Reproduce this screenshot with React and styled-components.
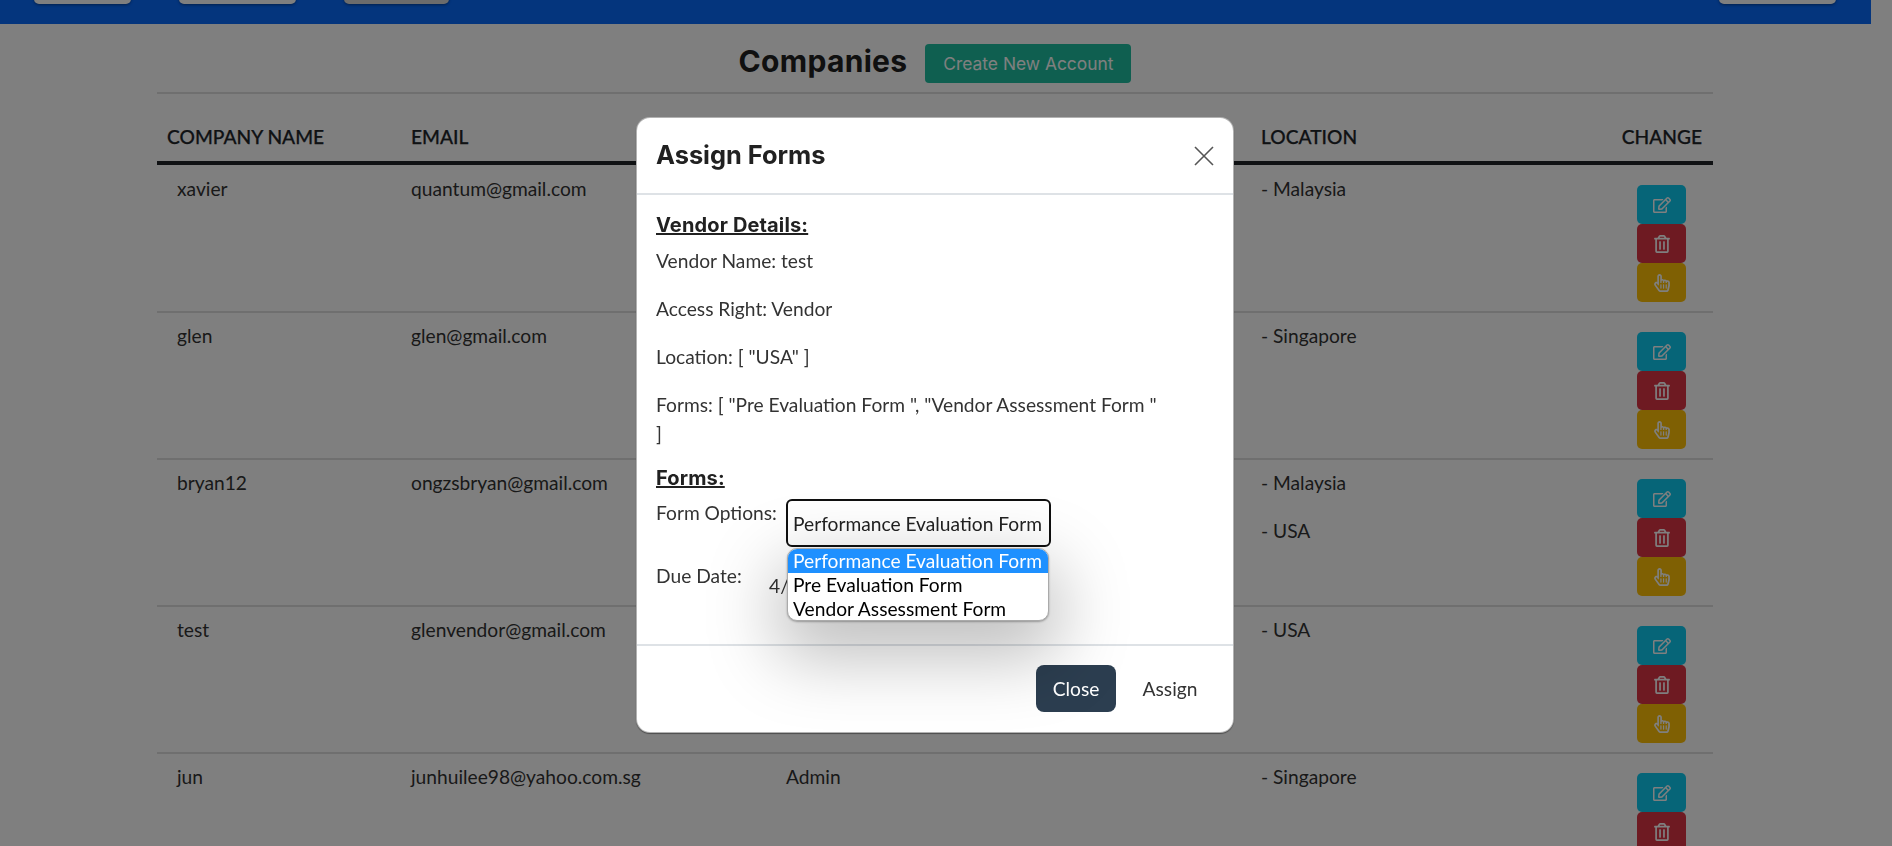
import React from "react";
import styled, { createGlobalStyle } from "styled-components";
import { FaRegEdit, FaRegTrashAlt, FaRegHandPointer } from "react-icons/fa";

const companies = [
  { name: "xavier", email: "quantum@gmail.com", right: "Vendor", locations: ["Malaysia"] },
  { name: "glen", email: "glen@gmail.com", right: "Admin", locations: ["Singapore"] },
  { name: "bryan12", email: "ongzsbryan@gmail.com", right: "Vendor", locations: ["Malaysia", "USA"] },
  { name: "test", email: "glenvendor@gmail.com", right: "Vendor", locations: ["USA"] },
  { name: "jun", email: "junhuilee98@yahoo.com.sg", right: "Admin", locations: ["Singapore"] },
];

const formOptions = ["Performance Evaluation Form", "Pre Evaluation Form", "Vendor Assessment Form"];

const App = () => {
  return (
    <>
      <GlobalStyle />
      <Page>
        <Nav>
          <NavGroup>
            <NavButton $w={97} />
            <NavButton $w={117} />
            <NavButton $w={105} $active />
          </NavGroup>
          <NavButton $w={117} />
        </Nav>
        <Content>
          <TitleRow>
            <Title>Companies</Title>
            <CreateButton>Create New Account</CreateButton>
          </TitleRow>
          <HeaderRow>
            <HeaderCell>COMPANY NAME</HeaderCell>
            <HeaderCell>EMAIL</HeaderCell>
            <HeaderCell>ACCESS RIGHT</HeaderCell>
            <HeaderCell>LOCATION</HeaderCell>
            <HeaderCell $right>CHANGE</HeaderCell>
          </HeaderRow>
          {companies.map((company) => (
            <Row key={company.name}>
              <NameCell>{company.name}</NameCell>
              <Cell>{company.email}</Cell>
              <Cell>{company.right}</Cell>
              <Cell>
                {company.locations.map((location) => (
                  <LocationLine key={location}>- {location}</LocationLine>
                ))}
              </Cell>
              <ChangeCell>
                <ActionButton $color="#0dcaf0">
                  <FaRegEdit />
                </ActionButton>
                <ActionButton $color="#dc3545">
                  <FaRegTrashAlt />
                </ActionButton>
                <ActionButton $color="#ffc107">
                  <FaRegHandPointer />
                </ActionButton>
              </ChangeCell>
            </Row>
          ))}
        </Content>
      </Page>

      <Overlay>
        <Modal>
          <ModalHeader>
            <ModalTitle>Assign Forms</ModalTitle>
            <CloseIcon width="20" height="20" viewBox="0 0 20 20">
              <path d="M1 1 L19 19 M19 1 L1 19" stroke="#555" strokeWidth="1.6" fill="none" />
            </CloseIcon>
          </ModalHeader>
          <ModalBody>
            <SectionTitle>Vendor Details:</SectionTitle>
            <Detail>Vendor Name: test</Detail>
            <Detail>Access Right: Vendor</Detail>
            <Detail>Location: [ "USA" ]</Detail>
            <Detail>Forms: [ "Pre Evaluation Form ", "Vendor Assessment Form " ]</Detail>
            <SectionTitle $second>Forms:</SectionTitle>
            <FormRow>
              <FormLabel $w={130}>Form Options:</FormLabel>
              <SelectWrap>
                <SelectBox>{formOptions[0]}</SelectBox>
                <Popup>
                  {formOptions.map((option, i) => (
                    <Option key={option} $selected={i === 0}>
                      {option}
                    </Option>
                  ))}
                </Popup>
              </SelectWrap>
            </FormRow>
            <FormRow $date>
              <FormLabel $w={113}>Due Date:</FormLabel>
              <DateValue>4/12/2023</DateValue>
            </FormRow>
          </ModalBody>
          <ModalFooter>
            <CloseButton>Close</CloseButton>
            <AssignButton>Assign</AssignButton>
          </ModalFooter>
        </Modal>
      </Overlay>
    </>
  );
};

const GlobalStyle = createGlobalStyle`
  html, body {
    margin: 0;
    height: 100%;
    overflow: hidden;
    background: #fff;
  }

  body {
    font-family: "Lato", "Liberation Sans", sans-serif;
    font-size: 19.2px;
    line-height: 1.5;
    color: #333;
  }

  * {
    box-sizing: border-box;
  }
`;

const Page = styled.div`
  width: 1871px;
  height: 846px;
  overflow: hidden;
`;

const Nav = styled.div`
  height: 24px;
  background: #086afb;
  display: flex;
  justify-content: space-between;
  align-items: flex-end;
  padding: 0 35px 20px 34px;
`;

const NavGroup = styled.div`
  display: flex;
  gap: 48px;
`;

const NavButton = styled.div`
  width: ${(p) => p.$w}px;
  height: 30px;
  flex-shrink: 0;
  border-radius: 5px;
  background: ${(p) => (p.$active ? "#d8d8d8" : "#ffffff")};
  box-shadow: 0 1px 3px rgba(0, 0, 0, 0.4);
`;

const Content = styled.div`
  width: 1556px;
  margin-left: 157px;
`;

const TitleRow = styled.div`
  height: 70px;
  padding-top: 20px;
  display: flex;
  justify-content: center;
  align-items: flex-start;
  gap: 18px;
  border-bottom: 2px solid #dedede;
`;

const Title = styled.h1`
  margin: -2px 0 0;
  font-family: "Inter", sans-serif;
  font-size: 30px;
  font-weight: 700;
  letter-spacing: 0.3px;
  line-height: 39px;
  color: #212121;
`;

const CreateButton = styled.button`
  width: 206px;
  height: 39px;
  padding: 0;
  border: none;
  border-radius: 4px;
  background: #1ebea0;
  color: #fff;
  font-family: "Inter", sans-serif;
  font-size: 17.4px;
`;

const HeaderRow = styled.div`
  display: grid;
  grid-template-columns: 244px 375px 475px 1fr auto;
  height: 71px;
  margin-bottom: 1px;
  padding: 29px 11px 0 10px;
  border-bottom: 4px solid #212529;
`;

const HeaderCell = styled.div`
  font-weight: 500;
  -webkit-text-stroke: 0.25px #212529;
  color: #212529;
  text-align: ${(p) => (p.$right ? "right" : "left")};
  white-space: nowrap;
`;

const Row = styled.div`
  display: grid;
  grid-template-columns: 244px 375px 475px 1fr auto;
  height: 147px;
  padding: 9px 27px 0 10px;
  border-bottom: 2px solid #dedede;
`;

const Cell = styled.div`
  color: #333;
`;

const NameCell = styled(Cell)`
  padding-left: 10px;
`;

const LocationLine = styled.div`
  margin-bottom: 19.2px;
`;

const ChangeCell = styled.div`
  display: flex;
  flex-direction: column;
  padding-top: 10px;
`;

const ActionButton = styled.div`
  width: 49px;
  height: 39px;
  display: flex;
  align-items: center;
  justify-content: center;
  border-radius: 5px;
  background: ${(p) => p.$color};
  color: #fff;
  font-size: 18px;
`;

const Overlay = styled.div`
  position: fixed;
  inset: 0;
  background: rgba(0, 0, 0, 0.5);
  padding: 117px 22px 0 0;
  display: flex;
  justify-content: center;
  align-items: flex-start;
`;

const Modal = styled.div`
  width: 598px;
  height: 616px;
  display: flex;
  flex-direction: column;
  background: #fff;
  border: 1px solid rgba(0, 0, 0, 0.3);
  border-radius: 14px;
  box-shadow: 0 1px 1px rgba(0, 0, 0, 0.4);
`;

const ModalHeader = styled.div`
  height: 77px;
  flex-shrink: 0;
  display: flex;
  align-items: center;
  justify-content: space-between;
  padding: 0 19px;
  border-bottom: 2px solid #dee2e6;
`;

const ModalTitle = styled.h4`
  margin: 0;
  font-family: "Inter", sans-serif;
  font-size: 25.4px;
  font-weight: 700;
  color: #212121;
`;

const CloseIcon = styled.svg`
  display: block;
`;

const ModalBody = styled.div`
  flex: 1;
  padding: 16px 19px 0;
`;

const SectionTitle = styled.div`
  font-family: "Inter", sans-serif;
  font-size: 20px;
  font-weight: 700;
  letter-spacing: 0.15px;
  line-height: 28.8px;
  text-decoration: underline;
  color: #212121;
  margin-top: ${(p) => (p.$second ? "-4px" : "0")};
  margin-bottom: 7px;
`;

const Detail = styled.p`
  margin: 0 0 19.2px;
  max-width: 506px;
`;

const FormRow = styled.div`
  display: flex;
  margin-top: ${(p) => (p.$date ? "15px" : "0")};
`;

const FormLabel = styled.div`
  width: ${(p) => p.$w}px;
  flex-shrink: 0;
`;

const SelectWrap = styled.div`
  position: relative;
`;

const SelectBox = styled.div`
  width: 265px;
  height: 48px;
  padding: 3px 5px 0;
  display: flex;
  align-items: center;
  background: #fff;
  border: 2px solid #101010;
  border-radius: 6px;
  color: #222;
  white-space: nowrap;
`;

const Popup = styled.div`
  position: absolute;
  z-index: 2;
  top: 49px;
  left: 1px;
  width: 262px;
  height: 73px;
  overflow: hidden;
  background: #fff;
  border: 1px solid #aaa;
  border-radius: 10px;
  box-shadow: 0 1px 2px rgba(0, 0, 0, 0.3), 0 26px 70px 10px rgba(0, 0, 0, 0.26);
`;

const Option = styled.div`
  height: 24px;
  padding: 0 5px;
  line-height: 24px;
  white-space: nowrap;
  color: ${(p) => (p.$selected ? "#fff" : "#000")};
  background: ${(p) => (p.$selected ? "#1e90ff" : "transparent")};
`;

const DateValue = styled.div`
  padding-top: 10px;
  color: #333;
`;

const ModalFooter = styled.div`
  height: 88px;
  flex-shrink: 0;
  display: flex;
  justify-content: flex-end;
  align-items: flex-start;
  gap: 8px;
  padding: 19px 17px 0 0;
  border-top: 2px solid #dee2e6;
`;

const CloseButton = styled.button`
  width: 80px;
  height: 47px;
  border: none;
  border-radius: 8px;
  background: #2c3e50;
  color: #fff;
  font-family: "Lato", sans-serif;
  font-size: 19.2px;
`;

const AssignButton = styled.button`
  width: 92px;
  height: 47px;
  border: none;
  background: transparent;
  color: #333;
  font-family: "Lato", sans-serif;
  font-size: 19.2px;
`;

export default App;
